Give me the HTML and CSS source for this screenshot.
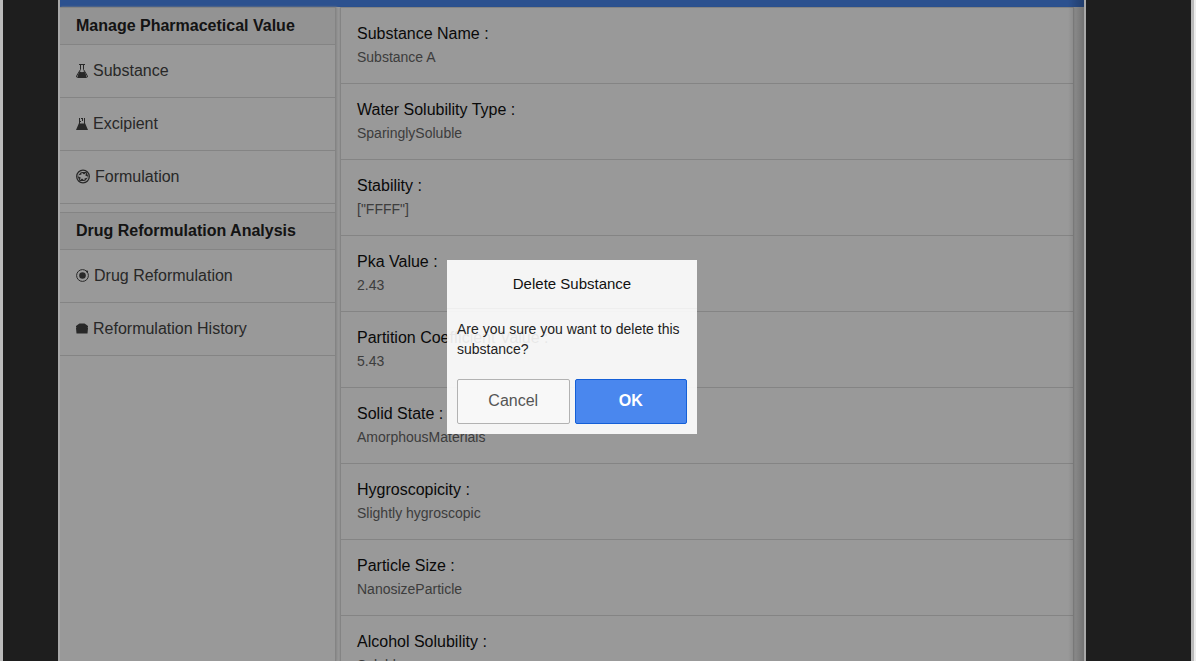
FILE: index.html
```
<!DOCTYPE html>
<html lang="en">
<head>
<meta charset="utf-8">
<title>Delete Substance</title>
<link rel="stylesheet" href="styles.css">
</head>
<body>
<div class="frame">
  <div class="app">
    <header class="bar"></header>
    <div class="columns">
      <nav class="menu">
        <h2 class="divider">Manage Pharmacetical Value</h2>
        <a class="item" href="#"><svg class="icon" width="12" height="16" viewBox="0 0 12 16"><path d="M3 1.500h6M4.500 2v4.500L.8 12.500Q0 14.500 1.500 14.500h9q1.500 0 .7-2L7.500 6.500V2" fill="none" stroke="currentColor"/><path d="M3.500 8.500 1.500 13q0 1 .7 1h7.600q.7 0 .7-1L8.500 8.500l-2.500.8z"/></svg>Substance</a>
        <a class="item" href="#"><svg class="icon" width="12" height="16" viewBox="0 0 12 16"><path d="M3 2h1v3h1v1H4v1.500h4V2h1v5l3 7H0l3-7zM5 2h2v3H6V3H5z"/></svg>Excipient</a>
        <a class="item" href="#"><svg class="icon" width="14" height="16" viewBox="0 0 14 16"><circle cx="7" cy="7.500" r="6.300" fill="none" stroke="currentColor" stroke-width="1.300"/><path d="M5 3h6L8 5.500zM10.500 3l2 5L9.300 6.500zM12 8.500 8.500 12.500V9.500zM9 12H3L6 9.500zM3.500 12l-2-5 3.200 1.500zM2 6.500 5.500 2.500v3z"/></svg>Formulation</a>
        <h2 class="divider spaced">Drug Reformulation Analysis</h2>
        <a class="item" href="#"><svg class="icon" width="13" height="16" viewBox="0 0 13 16"><circle cx="6.500" cy="7.500" r="5.900" fill="none" stroke="currentColor"/><circle cx="6.500" cy="7.500" r="3.300"/><circle cx="11" cy="3.500" r="1.100"/></svg>Drug Reformulation</a>
        <a class="item" href="#"><svg class="icon" width="12" height="16" viewBox="0 0 12 16"><path d="M2 3.500 3.500 2.500h5l1.500 1 2 1.500V6.500H0V5zM0 7h12l-.5 5.500H.5z"/><path d="M.5 6h11v2H.5z"/></svg>Reformulation History</a>
      </nav>
      <main class="details">
        <dl class="list">
          <div class="row"><dt>Substance Name :</dt><dd>Substance A</dd></div>
          <div class="row"><dt>Water Solubility Type :</dt><dd>SparinglySoluble</dd></div>
          <div class="row"><dt>Stability :</dt><dd>["FFFF"]</dd></div>
          <div class="row"><dt>Pka Value :</dt><dd>2.43</dd></div>
          <div class="row"><dt>Partition Coefficient Value :</dt><dd>5.43</dd></div>
          <div class="row"><dt>Solid State :</dt><dd>AmorphousMaterials</dd></div>
          <div class="row"><dt>Hygroscopicity :</dt><dd>Slightly hygroscopic</dd></div>
          <div class="row"><dt>Particle Size :</dt><dd>NanosizeParticle</dd></div>
          <div class="row"><dt>Alcohol Solubility :</dt><dd>Soluble</dd></div>
        </dl>
      </main>
    </div>
    <div class="backdrop">
      <section class="popup" role="dialog" aria-labelledby="popup-title">
        <h3 class="popup-title" id="popup-title">Delete Substance</h3>
        <p class="popup-text">Are you sure you want to delete this substance?</p>
        <div class="popup-buttons">
          <button class="button" type="button">Cancel</button>
          <button class="button primary" type="button">OK</button>
        </div>
      </section>
    </div>
  </div>
</div>
</body>
</html>
```
FILE: styles.css
```
* {
  box-sizing: border-box;
}

body {
  margin: 0;
  height: 100vh;
  overflow: hidden;
  background: #ececec;
  font-family: "Liberation Sans", Arial, sans-serif;
  font-size: 16px;
}

.frame {
  height: 100%;
  margin-right: 2px;
  padding: 0 105px 0 55px;
  border: solid #bbb;
  border-width: 0 3px;
  background: #1e1e1e;
}

.app {
  position: relative;
  display: flex;
  flex-direction: column;
  height: 100%;
  overflow: hidden;
  border: solid #a8a8a8;
  border-width: 0 2px;
  background: #fff;
}

.bar {
  flex: none;
  height: 7px;
  background: #4a87ee;
}

.columns {
  display: flex;
  flex: 1;
  min-height: 0;
}

.menu {
  flex: none;
  width: 276px;
  border-right: 1px solid #ddd;
  box-shadow: 1px 0 2px #ddd;
}

.divider {
  margin: 0;
  padding: 0 16px;
  border: solid #ddd;
  border-width: 1px 0;
  background: #f5f5f5;
  color: #222;
  font-size: 16px;
  line-height: 36px;
}

.spaced {
  margin-top: 8px;
}

.item {
  display: flex;
  align-items: center;
  gap: 5px;
  padding: 0 16px;
  border-bottom: 1px solid #ddd;
  color: #444;
  line-height: 52px;
  text-decoration: none;
}

.icon {
  flex: none;
  fill: currentColor;
}

.details {
  flex: 1;
  padding: 0 10px 0 4px;
}

.list {
  margin: 0;
  border: 1px solid #ddd;
  box-shadow: 0 1px 2px rgba(0, 0, 0, 0.15);
}

.row {
  padding: 16px 16px 16px;
  border-bottom: 1px solid #ddd;
}

dt {
  margin-bottom: 3px;
  color: #111;
  line-height: 20px;
}

dd {
  margin: 0;
  color: #666;
  font-size: 14px;
  line-height: 20px;
}

.backdrop {
  position: absolute;
  inset: 0;
  display: flex;
  align-items: center;
  justify-content: center;
  padding-top: 32px;
  background: linear-gradient(to left, rgba(0, 0, 0, 0.25), transparent 16px), rgba(0, 0, 0, 0.4);
}

.popup {
  width: 250px;
  background: rgba(255, 255, 255, 0.9);
}

.popup-title {
  margin: 0;
  border-bottom: 1px solid #eee;
  color: #111;
  font-size: 15px;
  font-weight: 400;
  line-height: 48px;
  text-align: center;
}

.popup-text {
  margin: 0;
  padding: 10px;
  color: #222;
  font-size: 14px;
  line-height: 20px;
}

.popup-buttons {
  display: flex;
  gap: 5px;
  padding: 10px;
}

.button {
  flex: 1;
  height: 45px;
  padding: 0;
  border: 1px solid #b2b2b2;
  border-radius: 2px;
  background: #f8f8f8;
  color: #555;
  font: inherit;
}

.primary {
  border-color: #145fd7;
  background: #4a87ee;
  color: #fff;
  font-weight: 700;
}
```
